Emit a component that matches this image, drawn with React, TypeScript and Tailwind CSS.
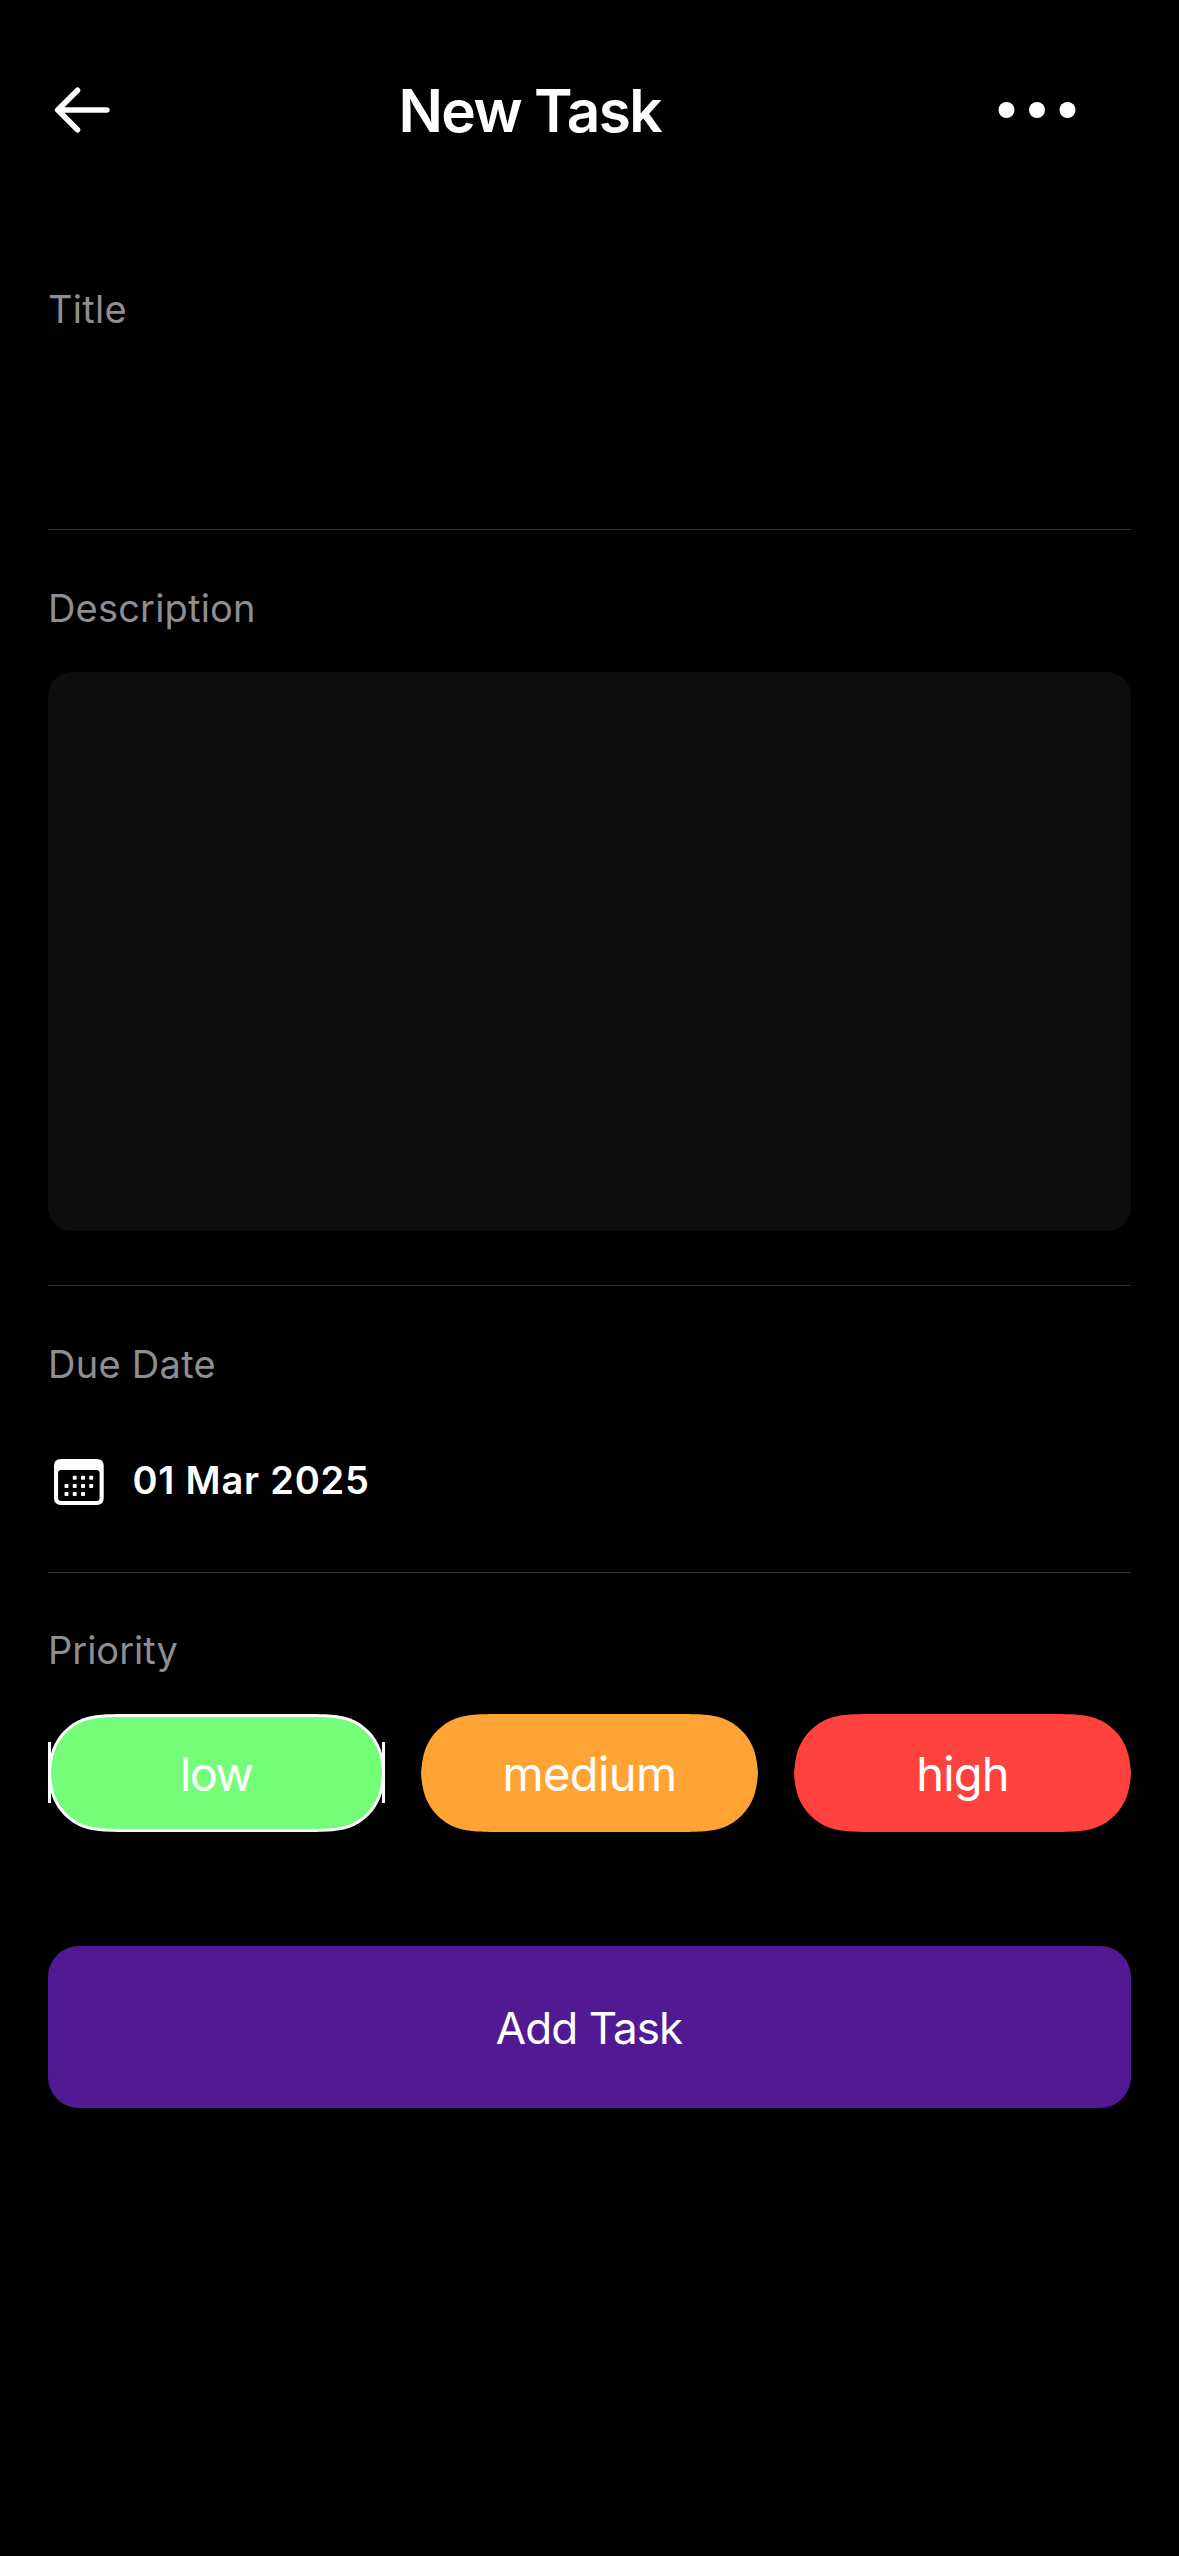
import React from "react";

function BackArrow() {
  return (
    <svg width="66" height="66" viewBox="0 0 66 66" fill="none" stroke="white" strokeWidth="5.6" strokeLinecap="round" strokeLinejoin="round">
      <path d="M29.5 13.3 L9.8 33 L29.5 52.7 M9.8 33 H58.8" />
    </svg>
  );
}

function MoreDots() {
  return (
    <svg width="84" height="24" viewBox="0 0 84 24" fill="white">
      <circle cx="11.5" cy="12" r="8" />
      <circle cx="42" cy="12" r="8" />
      <circle cx="72.5" cy="12" r="8" />
    </svg>
  );
}

const calendarDots = [
  [20.7, 18.7], [29, 18.7], [37.2, 18.7],
  [12.5, 27], [20.7, 27], [29, 27], [37.2, 27],
  [12.5, 35], [20.7, 35], [29, 35],
];

function CalendarIcon() {
  return (
    <svg width="50" height="46" viewBox="0 0 50 46" fill="white">
      <path
        fillRule="evenodd"
        d="M7 0H42.7Q49.7 0 49.7 7V39Q49.7 46 42.7 46H7Q0 46 0 39V7Q0 0 7 0Z M7.2 11Q4.1 11 4.1 14V38.8Q4.1 42 7.2 42H42.5Q45.6 42 45.6 38.8V14Q45.6 11 42.5 11Z"
      />
      {calendarDots.map(([cx, cy]) => (
        <rect key={`${cx}-${cy}`} x={cx - 2} y={cy - 2} width="4" height="4" rx="1" />
      ))}
    </svg>
  );
}

function Label({ children, className }: { children: React.ReactNode; className: string }) {
  return <div className={`text-[38px] leading-[46px] text-[#8e8e93] ${className}`}>{children}</div>;
}

function Divider() {
  return <div className="h-px shrink-0 bg-[#323232]" />;
}

const pillShape =
  "[clip-path:path('M85.6,0L251.4,0C276,0,288.4,0,301.6,4.2C316.1,9.5,327.5,20.9,332.8,35.4C335.7,44,336.5,52,337,59C336.5,66,335.7,74,332.8,82.6C327.5,97.1,316.1,108.5,301.6,113.8C288.4,118,276,118,251.4,118L85.6,118C61,118,48.6,118,35.4,113.8C20.9,108.5,9.5,97.1,4.2,82.6C1.3,74,0.5,66,0,59C0.5,52,1.3,44,4.2,35.4C9.5,20.9,20.9,9.5,35.4,4.2C48.6,0,61,0,85.6,0Z')]";

const innerPillShape =
  "[clip-path:path('M82.6,0L248.4,0C273,0,284.4,0,297.6,4C311.1,9,322,20,327,33.4C329.8,41,330.6,49,331,56C330.6,63,329.8,71,327,78.6C322,92,311.1,103,297.6,108C284.4,112,273,112,248.4,112L82.6,112C58,112,46.6,112,33.4,108C19.9,103,9,92,4,78.6C1.2,71,0.4,63,0,56C0.4,49,1.2,41,4,33.4C9,20,19.9,9,33.4,4C46.6,0,58,0,82.6,0Z')]";

export default function App() {
  return (
    <div className="flex h-[2556px] w-[1179px] flex-col bg-black font-['Inter',sans-serif] text-white">
      <header className="flex h-[220px] items-center pl-12">
        <button aria-label="Back">
          <BackArrow />
        </button>
        <h1 className="ml-[284.5px] h-[70px] w-[264px] text-[58.5px] leading-[71.5px] font-semibold tracking-[-1.62px] whitespace-nowrap">
          New Task
        </h1>
        <button aria-label="More" className="ml-[332.9px]">
          <MoreDots />
        </button>
      </header>

      <main className="flex flex-col px-12 pt-[66px]">
        <Label className="tracking-[0.3px]">Title</Label>
        <div className="h-[197px]" />
        <Divider />

        <Label className="mt-[55px] tracking-[0.19px]">Description</Label>
        <div className="mt-[41px] h-[559px] rounded-3xl bg-[#0d0d0d]" />
        <div className="h-[54px]" />
        <Divider />

        <Label className="mt-[55px] tracking-[0.28px]">Due Date</Label>
        <div className="mt-[68px] flex h-[50px] items-center pl-1.5">
          <div className="mt-[4px]">
            <CalendarIcon />
          </div>
          <span className="ml-[28.5px] text-[38px] leading-[46px] font-semibold tracking-[0.78px]">01 Mar 2025</span>
        </div>
        <div className="h-[67px]" />
        <Divider />

        <Label className="mt-[54px] tracking-[0px]">Priority</Label>
        <div className="mt-[41px] flex gap-9">
          <button className="relative h-[118px] w-[337px]">
            <div className={`h-full bg-white p-[3px] ${pillShape}`}>
              <div className={`flex h-full items-center justify-center bg-[#75fd7a] pt-0.5 pr-px text-[47px] tracking-[-1.8px] ${innerPillShape}`}>
                low
              </div>
            </div>
            <i className="absolute top-[28px] left-0 h-[61px] w-[3px] bg-white" />
            <i className="absolute top-[28px] right-0 h-[61px] w-[3px] bg-white" />
          </button>
          <button className={`flex h-[118px] w-[337px] items-center justify-center bg-[#ffa335] pt-0.5 text-[47px] tracking-[-0.62px] ${pillShape}`}>
            medium
          </button>
          <button className={`flex h-[118px] w-[337px] items-center justify-center bg-[#ff423d] pt-0.5 text-[47px] tracking-[-0.85px] ${pillShape}`}>
            high
          </button>
        </div>

        <button className="mt-[114px] flex h-[162px] items-center justify-center rounded-[31px] bg-[#521a92] pt-0.5 pr-px text-[44px] tracking-[-0.95px]">
          Add Task
        </button>
      </main>
    </div>
  );
}
